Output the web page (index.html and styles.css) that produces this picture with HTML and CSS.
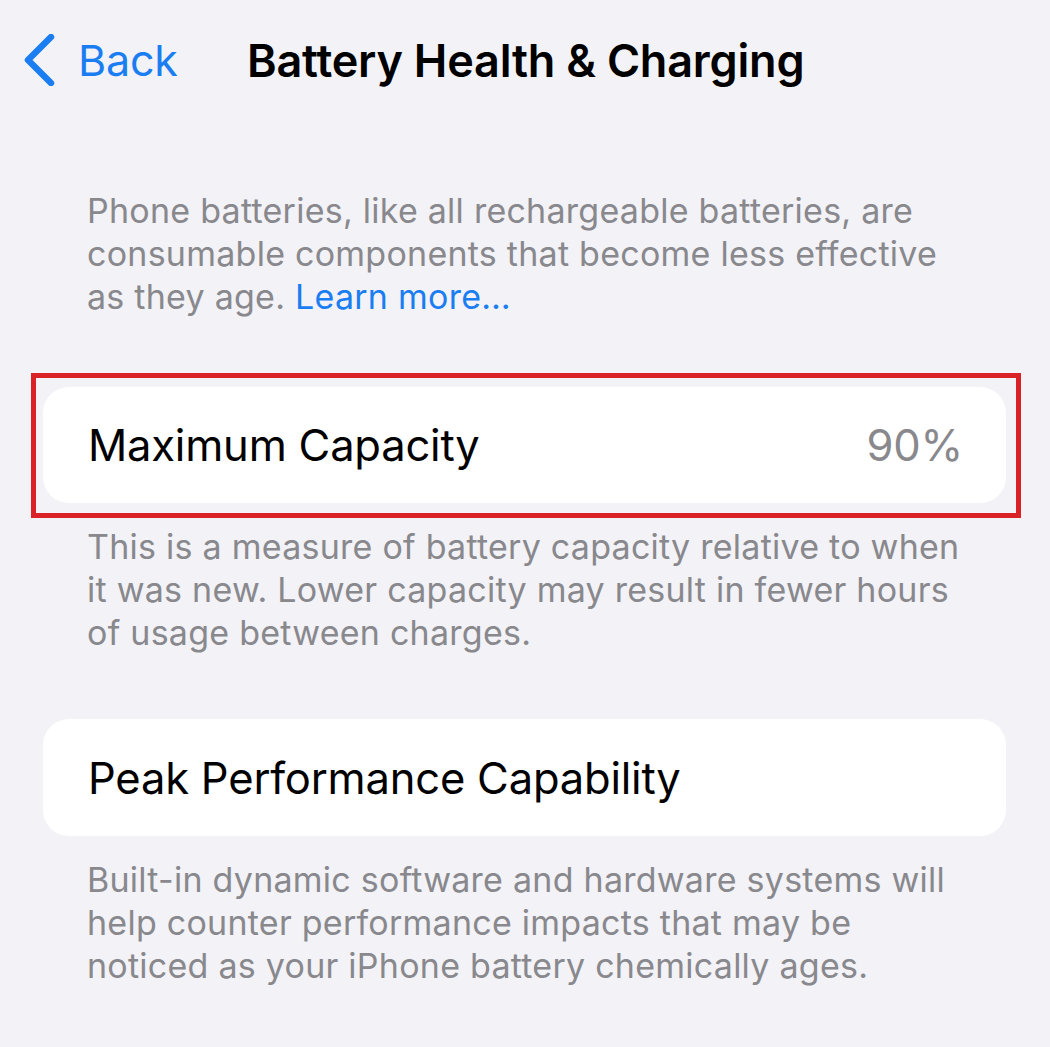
FILE: index.html
```html
<!DOCTYPE html>
<html lang="en">
<head>
<meta charset="utf-8">
<title>Battery Health &amp; Charging</title>
<link rel="stylesheet" href="styles.css">
</head>
<body>
<div class="screen">
  <header class="nav">
    <a class="back" href="#">
      <svg class="chevron" width="36" height="52" viewBox="0 0 36 52" aria-hidden="true">
        <path d="M30 3 L7 26 L30 49" fill="none" stroke="#1a7ef2" stroke-width="6.5" stroke-linecap="round" stroke-linejoin="round"/>
      </svg>
      <span class="back-label">Back</span>
    </a>
    <h1 class="title">Battery Health &amp; Charging</h1>
  </header>

  <main class="content">
    <p class="note note-intro">Phone batteries, like all rechargeable batteries, are consumable components that become less effective as they age. <a class="link" href="#">Learn more…</a></p>

    <div class="card card-highlight">
      <span class="card-label">Maximum Capacity</span>
      <span class="card-value">90%</span>
    </div>
    <p class="note">This is a measure of battery capacity relative to when it was new. Lower capacity may result in fewer hours of usage between charges.</p>

    <div class="card card-second">
      <span class="card-label">Peak Performance Capability</span>
    </div>
    <p class="note">Built-in dynamic software and hardware systems will help counter performance impacts that may be noticed as your iPhone battery chemically ages.</p>
  </main>
</div>
</body>
</html>
```

FILE: styles.css
```css
* { box-sizing: border-box; }

html, body {
  margin: 0;
  padding: 0;
  background: #f2f2f7;
}

body {
  font-family: Inter, "Noto Sans", "Liberation Sans", sans-serif;
  color: #000;
  -webkit-font-smoothing: antialiased;
}

.screen {
  width: 1050px;
  min-height: 1047px;
  background: #f2f2f7;
  overflow: hidden;
}

.nav {
  height: 120px;
  display: flex;
  align-items: center;
  padding-left: 21px;
}

.back {
  display: flex;
  align-items: center;
  gap: 21px;
  text-decoration: none;
  color: #1a7ef2;
  width: 226px;
}

.chevron {
  display: block;
  flex: none;
}

.back-label {
  font-size: 43px;
  font-weight: 400;
  letter-spacing: -0.2px;
}

.title {
  margin: 0;
  font-size: 45px;
  font-weight: 600;
  letter-spacing: -0.2px;
  color: #000;
}

.content {
  padding: 69px 44px 0 43px;
  display: flex;
  flex-direction: column;
}

.note {
  margin: 0;
  padding: 0 30px 0 44px;
  font-size: 34px;
  line-height: 43px;
  color: #88888d;
  letter-spacing: 0.25px;
}

.link {
  color: #1a7ef2;
  text-decoration: none;
}

.card {
  position: relative;
  display: flex;
  align-items: center;
  justify-content: space-between;
  background: #fff;
  border-radius: 26px;
  height: 116px;
  padding: 0 43px 0 45px;
}

.card-highlight {
  margin-top: 69px;
  margin-bottom: 22px;
}

.card-highlight::after {
  content: "";
  position: absolute;
  top: -14px;
  left: -12px;
  right: -15px;
  bottom: -15px;
  border: 5px solid #db2128;
  pointer-events: none;
}

.card-second {
  margin-top: 65px;
  margin-bottom: 22px;
  height: 117px;
}

.card-label {
  font-size: 43.5px;
  letter-spacing: -0.2px;
}

.card-value {
  font-size: 43.5px;
  color: #88888d;
  letter-spacing: -0.2px;
}
```
